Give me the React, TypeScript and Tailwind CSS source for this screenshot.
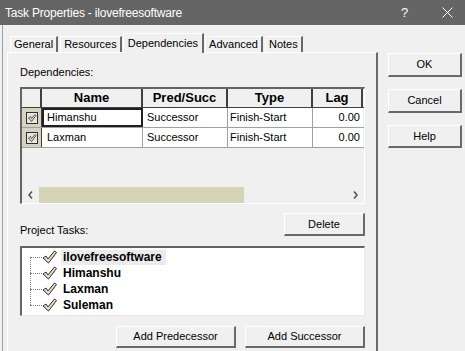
import React from "react";

const font = "font-['Liberation_Sans',Arial,sans-serif]";

function Btn({ children, className = "" }: { children: React.ReactNode; className?: string }) {
  return (
    <button
      className={`flex items-center justify-center bg-[#f0f0f0] border-t border-l border-white border-r-2 border-b-2 border-r-[#696969] border-b-[#696969] text-[11px] text-black ${className}`}
    >
      {children}
    </button>
  );
}

function Tab({ label, active }: { label: string; active?: boolean }) {
  return (
    <div
      className={`flex items-center border-t border-l border-white border-r-2 border-r-[#696969] text-[11px] text-black ${
        active ? "h-[20px] px-[4px] -mb-px bg-[#f0f0f0] relative z-10" : "h-[16px] px-[3px] mx-[1px]"
      }`}
    >
      {label}
    </div>
  );
}

function GridCheck() {
  return (
    <div className="w-[20px] h-full bg-[#d6d2c2] border-r border-r-[#404040] flex items-center justify-center">
      <svg width="12" height="12" viewBox="0 0 12 12">
        <rect x="0.5" y="0.5" width="11" height="11" fill="#e8e6dc" stroke="#303030" />
        <path d="M2.5 6 L4.5 4.5 L5.5 6.5 L9 2.5 L10 3.5 L5.5 9.5 Z" fill="#e4dfc8" stroke="#303030" strokeWidth="0.8" />
      </svg>
    </div>
  );
}

function TreeCheck() {
  return (
    <svg width="15" height="14" viewBox="0 0 15 14">
      <path d="M1 8 L4 6 L6 9 L12.5 1 L14.5 2.5 L6.5 13 Z" fill="#e2dec8" stroke="#2a2a2a" strokeWidth="1" strokeLinejoin="round" />
    </svg>
  );
}

const rows = [
  { name: "Himanshu", ps: "Successor", type: "Finish-Start", lag: "0.00", focus: true },
  { name: "Laxman", ps: "Successor", type: "Finish-Start", lag: "0.00", focus: false },
];

const tasks = ["ilovefreesoftware", "Himanshu", "Laxman", "Suleman"];

export default function App() {
  return (
    <div className={`w-[465px] h-[351px] bg-[#f0f0f0] flex flex-col overflow-hidden ${font}`}>
      {/* title bar */}
      <div className="h-[25px] bg-[#656565] flex items-center pl-[5px] text-white shrink-0">
        <span className="text-[12px] tracking-[-0.2px] flex-1">Task Properties - ilovefreesoftware</span>
        <span className="text-[13px] w-[10px] mr-[31px]">?</span>
        <svg width="11" height="11" viewBox="0 0 11 11" className="mr-[12px]">
          <path d="M0.5 0.5 L10.5 10.5 M10.5 0.5 L0.5 10.5" stroke="#ffffff" strokeWidth="1" />
        </svg>
      </div>

      <div className="flex flex-1 min-h-0 ml-[2px] border-l border-l-[#a0a0a0]">
        {/* left: tab control */}
        <div className="w-[375px] pl-[4px] flex flex-col">
          <div className="h-[27px] flex items-end pl-[2px]">
            <Tab label="General" />
            <Tab label="Resources" />
            <Tab label="Dependencies" active />
            <Tab label="Advanced" />
            <Tab label="Notes" />
          </div>
          <div className="flex-1 border-l border-t border-white border-r-2 border-r-[#696969] pl-[12px] pr-[11px] flex flex-col">
            <div className="pt-[12px] text-[11px] leading-[14px] text-black">Dependencies:</div>

            {/* grid */}
            <div className="mt-[8px] h-[117px] border-t-2 border-l-2 border-[#646464] border-r border-b border-r-white border-b-white flex flex-col text-[11px] text-black">
              <div className="h-[19px] flex border-b border-b-[#404040] font-bold text-[13px]">
                <div className="w-[20px] border-r-2 border-r-[#404040]" />
                <div className="w-[101px] border-r-2 border-r-[#404040] flex items-center justify-center">Name</div>
                <div className="w-[85px] border-r-2 border-r-[#404040] flex items-center justify-center">Pred/Succ</div>
                <div className="w-[85px] border-r-2 border-r-[#404040] flex items-center justify-center">Type</div>
                <div className="w-[50px] border-r-2 border-r-[#404040] flex items-center justify-center">Lag</div>
              </div>
              {rows.map((r) => (
                <div key={r.name} className="h-[20px] flex border-b border-b-[#a0a0a0]">
                  <GridCheck />
                  <div
                    className={`w-[101px] bg-white flex items-center pl-[3px] ${
                      r.focus ? "border-2 border-[#202020]" : "border-r border-r-[#a0a0a0] pl-[5px]"
                    }`}
                  >
                    {r.name}
                  </div>
                  <div className="w-[85px] bg-white border-r border-r-[#a0a0a0] flex items-center pl-[4px]">{r.ps}</div>
                  <div className="w-[85px] bg-white border-r border-r-[#a0a0a0] flex items-center pl-[2px]">{r.type}</div>
                  <div className="w-[50px] bg-white flex items-center justify-end pr-[3px]">{r.lag}</div>
                </div>
              ))}
              <div className="flex-1" />
              <div className="h-[16px] flex items-center">
                <div className="w-[17px] flex justify-center">
                  <svg width="5" height="8" viewBox="0 0 5 8">
                    <path d="M4 0.5 L1 4 L4 7.5" stroke="#505050" strokeWidth="1.5" fill="none" />
                  </svg>
                </div>
                <div className="w-[205px] h-full bg-[#d6d3b6]" />
                <div className="flex-1" />
                <div className="w-[17px] flex justify-center">
                  <svg width="5" height="8" viewBox="0 0 5 8">
                    <path d="M1 0.5 L4 4 L1 7.5" stroke="#505050" strokeWidth="1.5" fill="none" />
                  </svg>
                </div>
              </div>
            </div>

            <div className="mt-[9px] h-[23px] flex items-end justify-between">
              <span className="text-[11px] leading-[14px] text-black -mb-px">Project Tasks:</span>
              <Btn className="w-[81px] h-[23px]">Delete</Btn>
            </div>

            {/* tree */}
            <div className="mt-[10px] h-[70px] bg-white border-t-2 border-l-2 border-[#646464] border-r border-b border-r-[#e8e8e8] border-b-[#e8e8e8] pt-[1px] relative">
              <div className="absolute left-[8px] top-[9px] h-[48px] border-l border-dotted border-[#808080]" />
              {tasks.map((t, i) => (
                <div key={t} className="h-[16px] flex items-center">
                  <div className="w-[8px]" />
                  <div className="w-[12px] border-t border-dotted border-[#808080]" />
                  <TreeCheck />
                  <span
                    className={`ml-[4px] px-[2px] text-[12px] font-bold text-black leading-[15px] ${
                      i === 0 ? "bg-[#ebebeb] pr-[4px]" : ""
                    }`}
                  >
                    {t}
                  </span>
                </div>
              ))}
            </div>

            <div className="mt-[10px] flex justify-end gap-[9px]">
              <Btn className="w-[120px] h-[22px]">Add Predecessor</Btn>
              <Btn className="w-[120px] h-[22px]">Add Successor</Btn>
            </div>
          </div>
        </div>

        {/* right: dialog buttons */}
        <div className="pl-[10px] pt-[28px] flex flex-col gap-[12px]">
          <Btn className="w-[74px] h-[24px]">OK</Btn>
          <Btn className="w-[74px] h-[24px]">Cancel</Btn>
          <Btn className="w-[74px] h-[23px]">Help</Btn>
        </div>
      </div>
    </div>
  );
}
